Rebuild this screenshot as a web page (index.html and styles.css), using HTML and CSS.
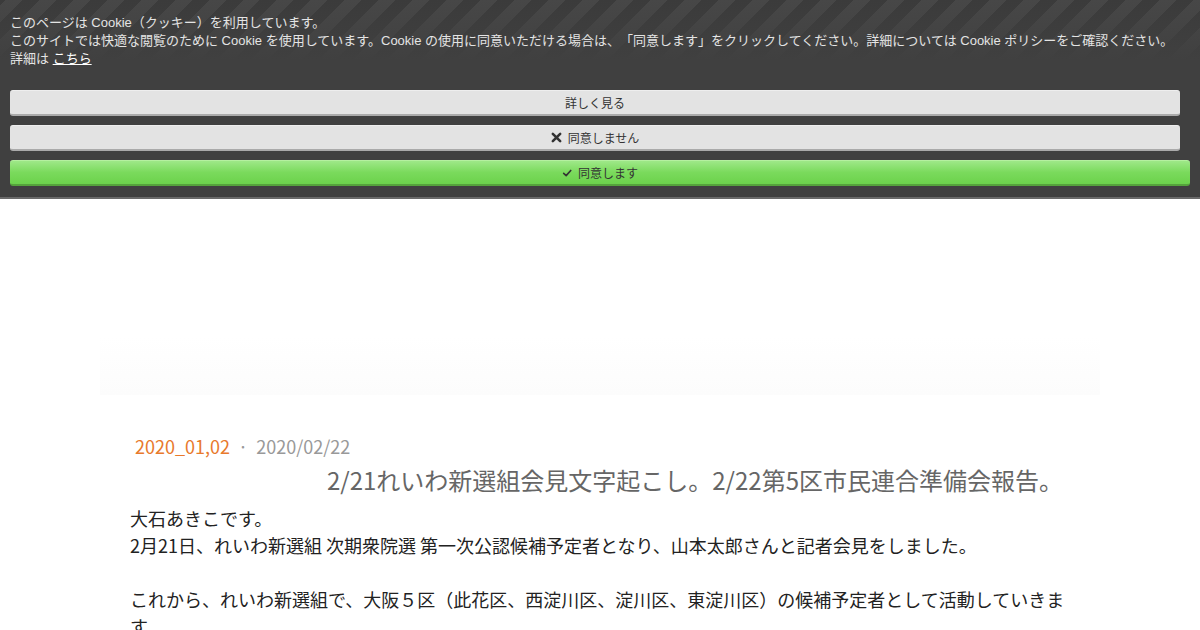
FILE: index.html
```html
<!DOCTYPE html>
<html lang="ja">
<head>
    <meta charset="UTF-8">
    <meta name="viewport" content="width=device-width, initial-scale=1.0">
    <title>2/21れいわ新選組会見文字起こし。2/22第5区市民連合準備会報告。</title>
    <link rel="stylesheet" href="styles.css">
</head>
<body>
    <div class="cookie-bar">
        <div class="cookie-text">
            <p>このページは Cookie（クッキー）を利用しています。</p>
            <p>このサイトでは快適な閲覧のために Cookie を使用しています。Cookie の使用に同意いただける場合は、「同意します」をクリックしてください。詳細については Cookie ポリシーをご確認ください。</p>
            <p>詳細は <a href="#">こちら</a></p>
        </div>
        <div class="cookie-buttons">
            <button class="btn btn-more">詳しく見る</button>
            <button class="btn btn-deny">
                <svg width="11" height="11" viewBox="0 0 12 12"><path d="M2 2 L10 10 M10 2 L2 10" stroke="#333" stroke-width="2.8" stroke-linecap="round"/></svg>
                同意しません
            </button>
            <button class="btn btn-accept">
                <svg width="10" height="10" viewBox="0 0 12 12"><path d="M2 6.5 L5 9.2 L10.5 3" fill="none" stroke="#333" stroke-width="2" stroke-linecap="round" stroke-linejoin="round"/></svg>
                同意します
            </button>
        </div>
    </div>

    <div class="header-space"></div>

    <div class="article">
        <div class="meta">
            <a class="category" href="#">2020_01,02</a>
            <span class="dot">·</span>
            <span class="date">2020/02/22</span>
        </div>
        <h1 class="title">2/21れいわ新選組会見文字起こし。2/22第5区市民連合準備会報告。</h1>
        <div class="content">
            <p>大石あきこです。<br>2月21日、れいわ新選組 次期衆院選 第一次公認候補予定者となり、山本太郎さんと記者会見をしました。</p>
            <p>これから、れいわ新選組で、大阪５区（此花区、西淀川区、淀川区、東淀川区）の候補予定者として活動していきます。</p>
        </div>
    </div>
</body>
</html>
```

FILE: styles.css
```css
body {
    margin: 0;
    padding: 0;
    background-color: #fff;
    font-family: "Noto Sans CJK JP", sans-serif;
    overflow: hidden;
}

.cookie-bar {
    background-color: #404040;
    background-image:
        linear-gradient(to bottom, rgba(64, 64, 64, 0) 0, #404040 60px),
        repeating-linear-gradient(-45deg, #3b3b3b 0, #3b3b3b 12px, #474747 12px, #474747 24px);
    border-bottom: 2px solid #6a6a6a;
    padding: 14px 10px 10px 10px;
    height: 173px;
}

.cookie-text {
    font-family: "Liberation Sans", "Noto Sans CJK JP", sans-serif;
    font-size: 13px;
    line-height: 18px;
    color: #e4e4e4;
    text-spacing-trim: space-all;
}

.cookie-text p {
    margin: 0;
}

.cookie-text a {
    color: #fff;
    text-decoration: underline;
}

.cookie-buttons {
    margin-top: 22px;
    display: flex;
    flex-direction: column;
    gap: 9px;
}

.btn {
    display: flex;
    justify-content: center;
    align-items: center;
    gap: 6px;
    height: 26px;
    border: none;
    border-radius: 3px;
    font-family: "Liberation Sans", "Noto Sans CJK JP", sans-serif;
    font-size: 12px;
    color: #333;
    cursor: pointer;
    padding: 0;
}

.btn-more,
.btn-deny {
    width: 1170px;
    background-color: #e3e3e3;
    border-bottom: 2px solid #aaa;
    border-top: 1px solid #eee;
}

.btn-accept {
    width: 1180px;
    background: linear-gradient(to bottom, #9ee888 0%, #7ada5c 50%, #6cd24c 100%);
    border-bottom: 2px solid #55a33c;
    border-top: 1px solid #b5f0a0;
}

.header-space {
    height: 196px;
    margin: 0 100px;
    background: linear-gradient(to bottom, #fff 0%, #fff 70%, #fcfcfc 100%);
}

.article {
    width: 940px;
    margin: 0 auto;
    padding: 38px 30px 0 30px;
}

.meta {
    padding-left: 5px;
    font-size: 18px;
    color: #999;
    line-height: 26px;
}

.meta .category {
    color: #e8792c;
    text-decoration: none;
}

.meta .dot {
    margin: 0 4px;
}

.title {
    margin: 4px 0 8px 0;
    font-size: 24px;
    font-weight: normal;
    color: #666;
    text-align: right;
    padding-right: 7px;
    line-height: 34px;
    text-spacing-trim: space-all;
}

.content {
    font-size: 18px;
    line-height: 27px;
    color: #222;
}

.content p {
    margin: 0 0 27px 0;
}
```
